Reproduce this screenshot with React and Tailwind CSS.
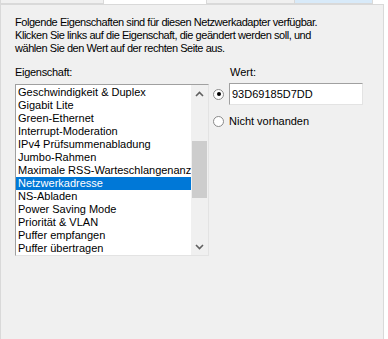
import React from 'react';

const items = [
  'Geschwindigkeit & Duplex',
  'Gigabit Lite',
  'Green-Ethernet',
  'Interrupt-Moderation',
  'IPv4 Prüfsummenabladung',
  'Jumbo-Rahmen',
  'Maximale RSS-Warteschlangenanzahl',
  'Netzwerkadresse',
  'NS-Abladen',
  'Power Saving Mode',
  'Priorität & VLAN',
  'Puffer empfangen',
  'Puffer übertragen',
];

const Radio = ({ checked }) => (
  <span className="flex h-[11px] w-[11px] shrink-0 items-center justify-center rounded-full border border-[#8a8a8a] bg-white">
    {checked && <span className="h-[4px] w-[4px] rounded-full bg-black" />}
  </span>
);

const Chevron = ({ up }) => (
  <svg width="9" height="6" viewBox="0 0 9 6">
    <path
      d={up ? 'M1 5 L4.5 1.5 L8 5' : 'M1 1 L4.5 4.5 L8 1'}
      fill="none"
      stroke="#606060"
      strokeWidth="1.6"
    />
  </svg>
);

const App = () => {
  return (
    <div
      className="flex h-[339px] w-[388px] flex-col overflow-hidden bg-white text-[11px] leading-[13px] text-black"
      style={{ fontFamily: '"Liberation Sans", Arial, sans-serif' }}
    >
      {/* tab strip */}
      <div className="flex h-[4px] shrink-0">
        <div className="w-[104px] border-x border-b border-[#d9d9d9] bg-[#f0f0f0]" />
        <div className="w-[102px] bg-white" />
        <div className="w-[89px] border-x border-b border-[#d9d9d9] bg-[#f0f0f0]" />
        <div className="w-[78px] border-r border-b border-[#d9d9d9] bg-[#d8eaf9]" />
      </div>

      {/* panel */}
      <div className="mr-[4px] flex-1 border-x border-t border-[#d9d9d9] bg-[#f0f0f0] pl-[14px] pt-[11px]">
        <p className="whitespace-nowrap tracking-[-0.45px]">
          Folgende Eigenschaften sind für diesen Netzwerkadapter verfügbar.
          <br />
          Klicken Sie links auf die Eigenschaft, die geändert werden soll, und
          <br />
          wählen Sie den Wert auf der rechten Seite aus.
        </p>

        <div className="mt-[11px] flex">
          <div className="w-[194px]">
            <div className="tracking-[-0.3px]">Eigenschaft:</div>
            <div className="mt-[5px] flex h-[172px] border border-t-[#a0a0a0] border-l-[#a0a0a0] border-r-[#e3e3e3] border-b-[#e3e3e3] bg-white">
              <div className="flex-1 overflow-hidden pt-[1px]">
                {items.map((it) => (
                  <div
                    key={it}
                    className={
                      'h-[13px] whitespace-nowrap pl-[2px] ' +
                      (it === 'Netzwerkadresse' ? 'bg-[#0078d7] text-white' : '')
                    }
                  >
                    {it}
                  </div>
                ))}
              </div>
              <div className="flex w-[17px] flex-col bg-[#f0f0f0]">
                <div className="flex h-[17px] items-center justify-center">
                  <Chevron up />
                </div>
                <div className="flex-1">
                  <div className="mt-[39px] ml-[1px] h-[57px] w-[15px] bg-[#cdcdcd]" />
                </div>
                <div className="flex h-[17px] items-center justify-center">
                  <Chevron />
                </div>
              </div>
            </div>
          </div>

          <div className="ml-[4px] flex flex-col">
            <div className="pl-[17px]">Wert:</div>
            <div className="mt-[4px] flex items-center gap-[5px]">
              <Radio checked />
              <div className="flex h-[22px] w-[134px] items-center border border-t-[#a0a0a0] border-l-[#a0a0a0] border-r-[#e3e3e3] border-b-[#e3e3e3] bg-white pl-[2px]">
                93D69185D7DD
              </div>
            </div>
            <div className="mt-[10px] flex items-center gap-[5px]">
              <Radio />
              <span>Nicht vorhanden</span>
            </div>
          </div>
        </div>
      </div>
    </div>
  );
};

export default App;
